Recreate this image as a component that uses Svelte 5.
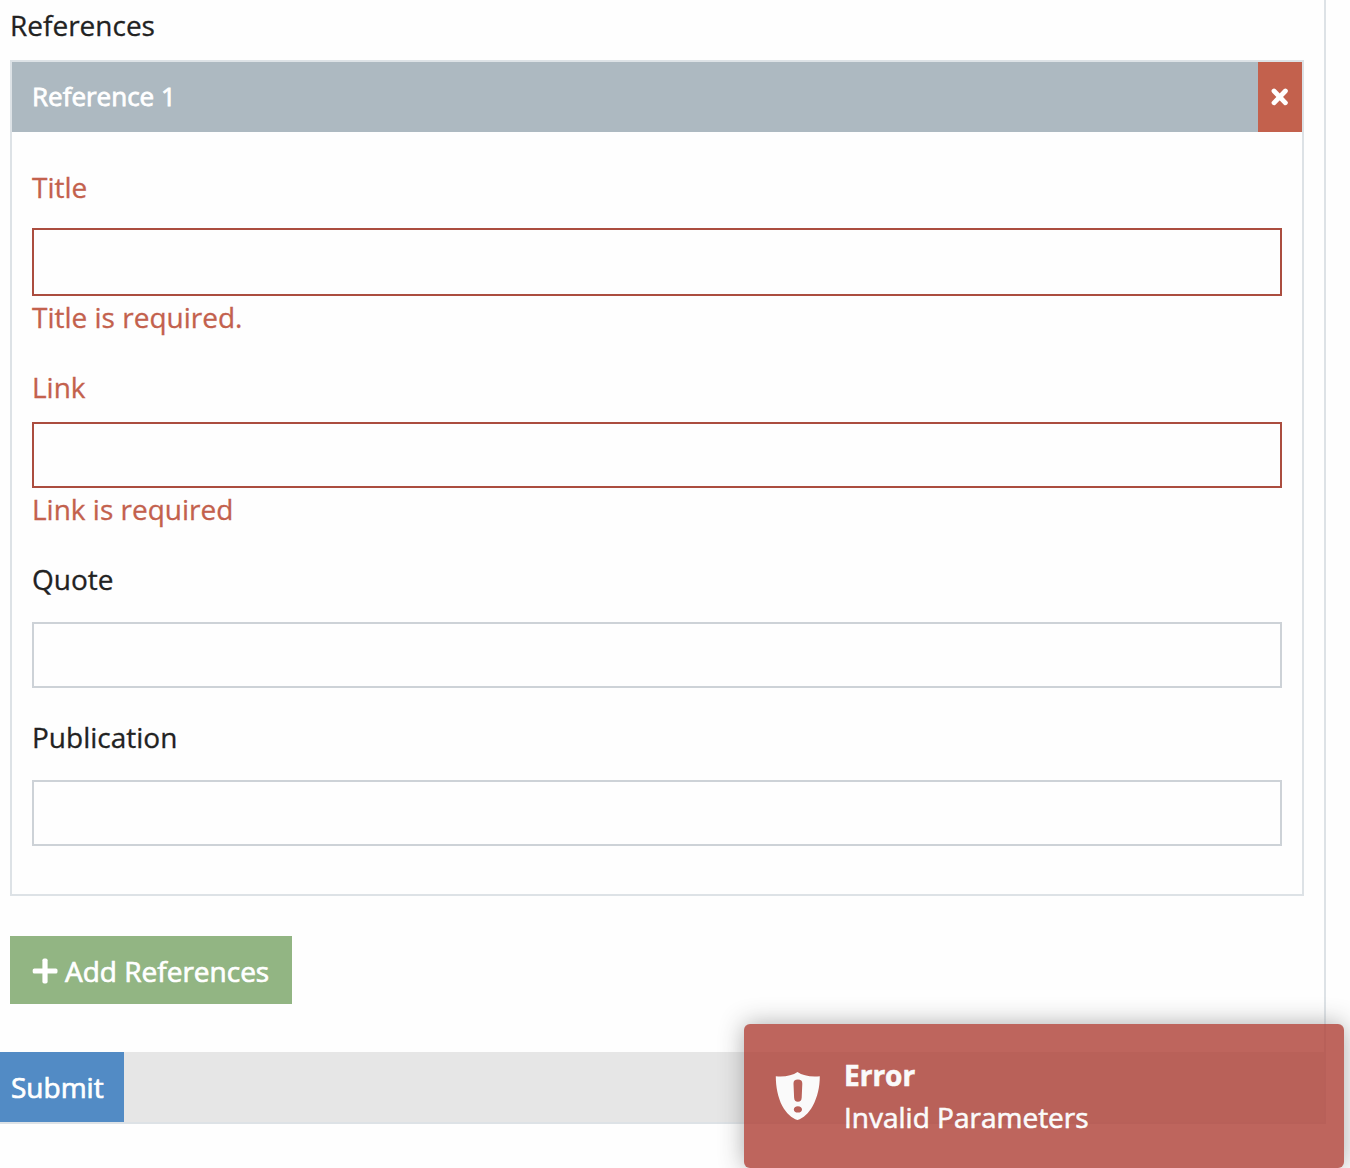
<script>
  const fields = [
    { id: 'title', label: 'Title', error: 'Title is required.' },
    { id: 'link', label: 'Link', error: 'Link is required' },
    { id: 'quote', label: 'Quote', error: '' },
    { id: 'publication', label: 'Publication', error: '' }
  ];
</script>

<main class="page">
  <section class="references">
    <h2 class="heading">References</h2>

    <div class="panel">
      <header class="panel-header">
        <span class="panel-title">Reference 1</span>
        <button class="remove" type="button" aria-label="Remove reference">
          <svg width="18" height="18" viewBox="0 0 18 18">
            <path d="M3 3 L14.4 14.8 M14.4 3 L3 14.8" />
          </svg>
        </button>
      </header>

      <div class="panel-body">
        {#each fields as field (field.id)}
          <div class="field {field.id}" class:invalid={field.error}>
            <label for={field.id}>{field.label}</label>
            <input id={field.id} type="text" />
            {#if field.error}
              <p class="message">{field.error}</p>
            {/if}
          </div>
        {/each}
      </div>
    </div>

    <button class="add" type="button">
      <svg width="26" height="26" viewBox="0 0 26 26">
        <rect x="0.7" y="10.4" width="24.8" height="5.2" rx="1.7" />
        <rect x="10.4" y="0.5" width="5.2" height="25" rx="1.7" />
      </svg>
      <span>Add References</span>
    </button>
  </section>

  <footer class="actions">
    <button class="submit" type="button">Submit</button>
  </footer>
</main>

<aside class="toast" role="alert">
  <svg class="shield" width="46" height="50" viewBox="0 0 46 50">
    <path
      fill-rule="evenodd"
      d="M22.5 1 C17.5 4.6 9.5 6 0.8 5.2 C0.8 16 2.8 26 7.3 35 C11.5 42.5 16.5 47 22.5 49 C28.5 47 33.5 42.5 37.7 35 C42.5 26 44.8 16 44.8 5.2 C35.5 6 27.5 4.6 22.5 1 Z
         M22.9 8.6 C25.9 8.6 27.4 10 27.3 12.8 L26.7 26.5 C26.5 29.4 25.4 30.8 22.9 30.8 C20.4 30.8 19.3 29.4 19.1 26.5 L18.5 12.8 C18.4 10 19.9 8.6 22.9 8.6 Z
         M22.9 35.2 C25.4 35.2 27 36.5 27 38.4 C27 40.3 25.4 41.6 22.9 41.6 C20.4 41.6 18.8 40.3 18.8 38.4 C18.8 36.5 20.4 35.2 22.9 35.2 Z"
    />
  </svg>
  <div class="toast-text">
    <strong>Error</strong>
    <span>Invalid Parameters</span>
  </div>
</aside>

<style>
  :global(body) {
    background: #fefefe;
    overflow: hidden;
  }

  .page,
  .toast,
  button {
    font: 400 28px/40px 'Open Sans', sans-serif;
    -webkit-text-stroke: 0.3px currentColor;
  }

  .page {
    box-sizing: border-box;
    width: 1326px;
    height: 1124px;
    display: flex;
    flex-direction: column;
    justify-content: space-between;
    border-right: 2px solid #dde2e6;
    border-bottom: 2px solid #dde2e6;
    color: #222;
  }

  .references {
    padding: 5px 20px 0 10px;
  }

  .heading {
    margin: 0 0 15px;
    font-size: 28px;
    font-weight: 400;
  }

  .panel {
    box-sizing: border-box;
    height: 836px;
    border: 2px solid #dde2e6;
  }

  .panel-header {
    display: flex;
    height: 70px;
    background: #adb9c1;
    color: #fff;
  }

  .panel-title {
    flex: 1;
    padding-left: 20px;
    font-size: 26px;
    line-height: 68px;
    -webkit-text-stroke-width: 0.8px;
  }

  button {
    padding: 0;
    border: 0;
    color: #fff;
    -webkit-text-stroke-width: 0.7px;
  }

  .remove {
    width: 44px;
    display: flex;
    align-items: center;
    justify-content: center;
    background: #c3614d;
  }

  .remove svg {
    fill: none;
    stroke: #fff;
    stroke-width: 4.8;
    stroke-linecap: round;
  }

  .panel-body {
    padding: 35px 20px 0;
  }

  .field {
    display: flex;
    flex-direction: column;
    margin-bottom: 29px;
  }

  label {
    margin-bottom: 23px;
  }

  input {
    box-sizing: border-box;
    width: 100%;
    height: 66px;
    margin: 0;
    padding: 0 16px;
    border: 2px solid #cdd2d7;
    border-radius: 0;
    background: #fefefe;
    font: inherit;
    outline: none;
  }

  .invalid {
    margin-bottom: 30px;
    color: #c3614d;
  }

  .invalid input {
    border-color: #ab4d3f;
  }

  .title label {
    margin-bottom: 21px;
  }

  .title input {
    height: 68px;
  }

  .link label {
    margin-bottom: 15px;
  }

  .message {
    margin: 1px 0 0;
  }

  .add {
    width: 282px;
    height: 68px;
    margin-top: 40px;
    padding: 2px 0 0 22px;
    display: flex;
    align-items: center;
    gap: 7px;
    background: #92b583;
    white-space: nowrap;
  }

  .add svg {
    fill: #fff;
  }

  .actions {
    display: flex;
    height: 70px;
    background: #e6e6e6;
  }

  .submit {
    width: 124px;
    padding: 0 0 1px 11px;
    background: #528bc5;
    text-align: left;
  }

  .toast {
    position: absolute;
    left: 744px;
    top: 1024px;
    box-sizing: border-box;
    width: 600px;
    height: 144px;
    padding: 30px 30px 0 31px;
    display: flex;
    gap: 23px;
    border-radius: 6px;
    background: #af4036;
    box-shadow: 0 0 24px #999;
    color: #fff;
    opacity: 0.8;
    line-height: 42px;
    -webkit-text-stroke-width: 0.6px;
  }

  .shield {
    margin-top: 17px;
    fill: #fff;
  }

  .toast-text {
    display: flex;
    flex-direction: column;
  }

  .toast strong {
    font-weight: 700;
  }
</style>
